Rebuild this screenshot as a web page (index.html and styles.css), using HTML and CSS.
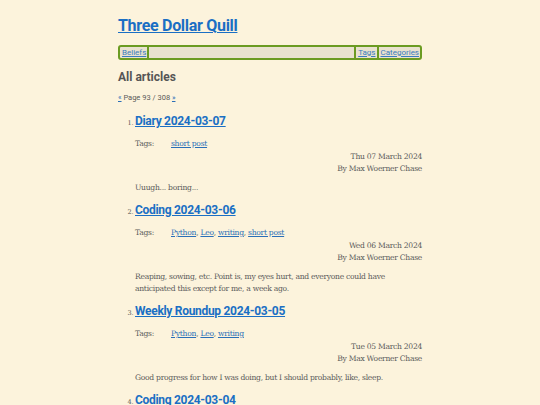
FILE: index.html
```html
<!DOCTYPE html>
<html>
<head>
<meta charset="utf-8">
<link rel="stylesheet" href="styles.css">
</head>
<body>
<div class="page">
  <h1 class="site-title"><a href="#">Three Dollar Quill</a></h1>
  <nav class="nav">
    <a href="#" class="nav-link">Beliefs</a>
    <span class="nav-fill"></span>
    <a href="#" class="nav-link nav-sep">Tags</a>
    <a href="#" class="nav-link nav-sep">Categories</a>
  </nav>
  <h2 class="section-title">All articles</h2>
  <p class="pager"><a href="#">«</a> Page 93 / 308 <a href="#">»</a></p>
  <ol class="articles">
    <li class="article">
      <h3 class="article-title"><a href="#">Diary 2024-03-07</a></h3>
      <div class="tags"><span class="tags-label">Tags:</span><span class="tags-list"><a href="#">short post</a></span></div>
      <div class="meta">Thu 07 March 2024<br>By Max Woerner Chase</div>
      <p class="summary">Uuugh... boring...</p>
    </li>
    <li class="article">
      <h3 class="article-title"><a href="#">Coding 2024-03-06</a></h3>
      <div class="tags"><span class="tags-label">Tags:</span><span class="tags-list"><a href="#">Python</a>, <a href="#">Leo</a>, <a href="#">writing</a>, <a href="#">short post</a></span></div>
      <div class="meta">Wed 06 March 2024<br>By Max Woerner Chase</div>
      <p class="summary">Reaping, sowing, etc. Point is, my eyes hurt, and everyone could have anticipated this except for me, a week ago.</p>
    </li>
    <li class="article">
      <h3 class="article-title"><a href="#">Weekly Roundup 2024-03-05</a></h3>
      <div class="tags"><span class="tags-label">Tags:</span><span class="tags-list"><a href="#">Python</a>, <a href="#">Leo</a>, <a href="#">writing</a></span></div>
      <div class="meta">Tue 05 March 2024<br>By Max Woerner Chase</div>
      <p class="summary">Good progress for how I was doing, but I should probably, like, sleep.</p>
    </li>
    <li class="article">
      <h3 class="article-title"><a href="#">Coding 2024-03-04</a></h3>
      <div class="tags"><span class="tags-label">Tags:</span><span class="tags-list"><a href="#">Python</a></span></div>
      <div class="meta">Mon 04 March 2024<br>By Max Woerner Chase</div>
      <p class="summary">More progress.</p>
    </li>
  </ol>
</div>
</body>
</html>
```
FILE: styles.css
```css
html, body {
  margin: 0;
  padding: 0;
  background: #fcf3dc;
}
body {
  font-family: "DejaVu Serif", serif;
  font-size: 7.6px;
  letter-spacing: -0.28px;
  line-height: 12px;
  color: #5a5a5a;
}
a {
  color: #2a6fb8;
}
.page {
  width: 304px;
  margin: 0 auto;
  padding-top: 15px;
}
.site-title {
  margin: 0;
  font-family: Roboto, sans-serif;
  font-size: 16px;
  letter-spacing: -0.3px;
  line-height: 22px;
  font-weight: 700;
}
.site-title a {
  color: #1a6fc4;
}
.nav {
  margin-top: 8px;
  display: flex;
  border: 2px solid #6b9b22;
  border-radius: 3px;
  background: #e9e2cf;
  font-family: Roboto, sans-serif;
  font-size: 8px;
  letter-spacing: 0;
  line-height: 11px;
}
.nav-link {
  padding: 0 1px 0 2px;
  color: #3a7cc0;
}
.nav-link:first-child {
  border-right: 2px solid #6b9b22;
}
.nav-fill {
  flex: 1;
}
.nav-sep {
  border-left: 2px solid #6b9b22;
}
.section-title {
  margin: 9px 0 0;
  font-family: Roboto, sans-serif;
  font-size: 12px;
  letter-spacing: 0;
  line-height: 16px;
  font-weight: 700;
  color: #555;
}
.pager {
  margin: 7px 0 0;
  font-family: Roboto, sans-serif;
  font-size: 7.5px;
  letter-spacing: 0;
  line-height: 12px;
}
.articles {
  margin: 8px 0 0;
  padding-left: 17px;
}
.article::marker {
  font-family: "DejaVu Serif", serif;
  font-size: 6.5px;
  color: #555;
}
.article + .article {
  margin-top: 7px;
}
.article-title {
  margin: 0;
  font-family: Roboto, sans-serif;
  font-size: 12px;
  letter-spacing: -0.3px;
  line-height: 18px;
  font-weight: 700;
}
.article-title a {
  color: #1a6fc4;
}
.tags {
  margin-top: 8px;
  display: flex;
}
.tags-label {
  width: 36px;
  flex: none;
}
.meta {
  margin-top: 1px;
  text-align: right;
}
.summary {
  margin: 7px 0 0;
}
```
